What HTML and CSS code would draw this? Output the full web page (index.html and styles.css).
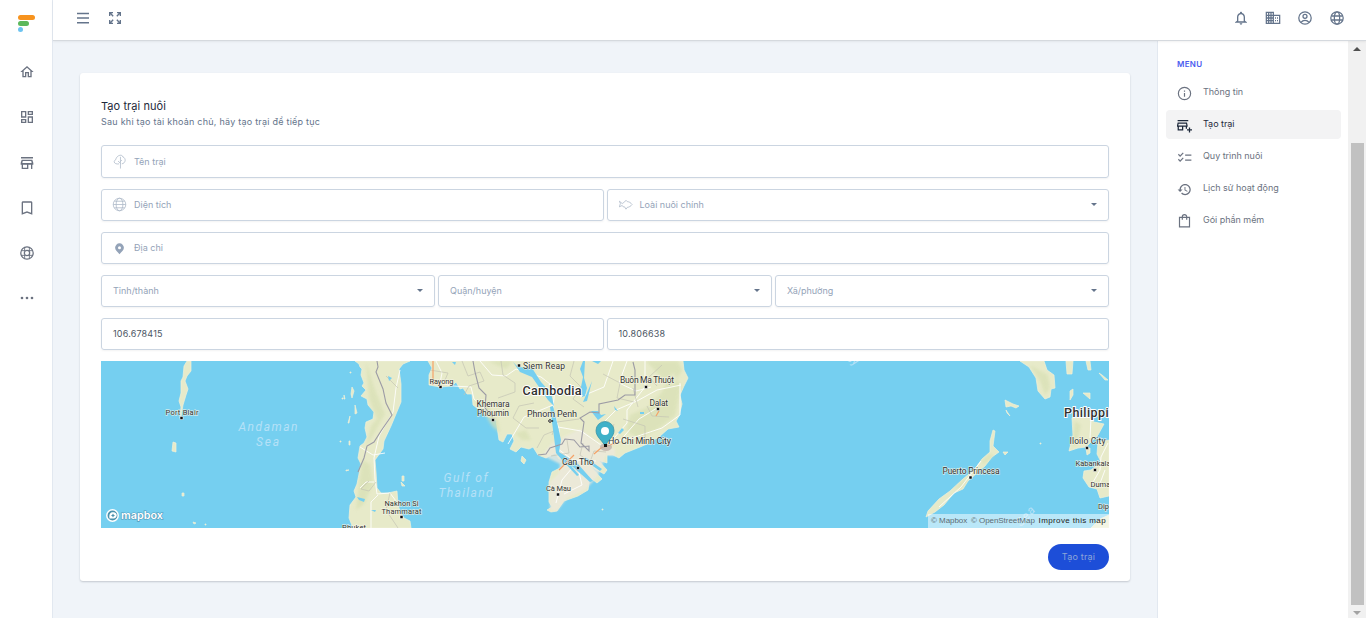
FILE: index.html
```html
<!DOCTYPE html>
<html lang="vi">
<head>
<meta charset="utf-8">
<title>Tạo trại nuôi</title>
<link rel="stylesheet" href="styles.css">
</head>
<body>
<div class="app">
  <nav class="rail">
    <svg class="logo" viewBox="0 0 18 18"><rect width="17" height="5" rx="2.500" fill="#f7931e"/><rect y="6" width="11" height="5" rx="2.500" fill="#5cb85c"/><circle cx="2.500" cy="14.500" r="2.500" fill="#6cc3f0"/></svg>
    <svg class="icon" viewBox="0 0 24 24"><path d="M12 5.690l5 4.500V18h-2v-6H9v6H7v-7.810l5-4.500M12 3L2 12h3v8h6v-6h2v6h6v-8h3L12 3z"/></svg>
    <svg class="icon" viewBox="0 0 24 24"><path d="M19 5v2h-4V5h4M9 5v6H5V5h4m10 8v6h-4v-6h4M9 17v2H5v-2h4M21 3h-8v6h8V3zM11 3H3v10h8V3zm10 8h-8v10h8V11zm-10 4H3v6h8v-6z"/></svg>
    <svg class="icon" viewBox="0 0 24 24"><path d="M18.360 9l.6 3H5.040l.6-3h12.720M21 3H3v2.200h18V3zm-1 4H4l-1.500 5v2.500H4V21h10v-6.500h4V21h2v-6.500h1.500V12L20 7zM6 19v-4.500h6V19H6z"/></svg>
    <svg class="icon" viewBox="0 0 24 24"><path d="M18 2H6c-1.100 0-2 .9-2 2v18l8-3 8 3V4c0-1.100-.9-2-2-2zm0 17l-6-2.200L6 19V4h12v15z"/></svg>
    <svg class="icon line" viewBox="0 0 24 24"><circle cx="12" cy="12" r="9.300"/><circle cx="12" cy="12" r="4"/><path d="M8.500 3.500V9M15.500 3.500V9M8.500 15v5.500M15.500 15v5.500M3.500 8.500H9M3.500 15.500H9M15 8.500h5.500M15 15.500h5.500" stroke-width="1.400"/></svg>
    <svg class="icon" viewBox="0 0 24 24"><circle cx="4.500" cy="12" r="2"/><circle cx="12" cy="12" r="2"/><circle cx="19.500" cy="12" r="2"/></svg>
  </nav>

  <div class="shell">
    <header class="topbar">
      <div class="group">
        <svg class="icon" viewBox="0 0 24 24"><path d="M3 4h18v2.200H3zM3 11h18v2.200H3zM3 18h18v2.200H3z"/></svg>
        <svg class="icon" viewBox="0 0 24 24"><path d="M3 3h6v2H6.500l3.500 3.500L8.500 10 5 6.500V9H3zM21 3v6h-2V6.500L15.500 10 14 8.500 17.500 5H15V3zM3 21v-6h2v2.500L8.500 14l1.500 1.500L6.500 19H9v2zM21 21h-6v-2h2.500L14 15.500l1.500-1.500 3.500 3.500V15h2z"/></svg>
      </div>
      <div class="group">
        <svg class="icon" viewBox="0 0 24 24"><path d="M12 22c1.100 0 2-.9 2-2h-4c0 1.100.9 2 2 2zm6-6v-5c0-3.070-1.630-5.640-4.500-6.320V4c0-.83-.67-1.500-1.500-1.500s-1.500.67-1.500 1.500v.68C7.640 5.360 6 7.920 6 11v5l-3 2.500V19h18v-.5L18 16zm-2 1H8v-6c0-2.480 1.510-4.500 4-4.500s4 2.020 4 4.500v6z"/></svg>
        <svg class="icon line" viewBox="0 0 24 24"><path d="M2 3.500h10.500V20H2zM2 8h10M2 12h10M2 16h10M5.500 4v16M9 4v16M12.500 8H22v12h-9.500M15 12h1.500M15 16h1.500M18 12h1.500M18 16h1.500"/></svg>
        <svg class="icon line" viewBox="0 0 24 24"><circle cx="12" cy="12" r="9.300"/><circle cx="12" cy="9.500" r="3"/><path d="M6 18.500c1.500-2 3.500-3 6-3s4.500 1 6 3"/></svg>
        <svg class="icon line" viewBox="0 0 24 24"><circle cx="12" cy="12" r="9.300"/><ellipse cx="12" cy="12" rx="4" ry="9.300"/><path d="M3.500 9h17M3.500 15h17"/></svg>
      </div>
    </header>

    <div class="body">
      <main class="content">
        <section class="card">
          <h1 class="title">Tạo trại nuôi</h1>
          <p class="subtitle">Sau khi tạo tài khoản chủ, hãy tạo trại để tiếp tục</p>
          <div class="form">
            <div class="field first">
              <svg class="fi" viewBox="0 0 16 16"><path d="M9 15.500V3M9 10L6.500 7.500M9 8l1.500-1.500M7.500 10.500c-4.500 1-7-2.500-3.500-4.500C5 1 11 0 11.500 3c4 1.500 3 7-1 7.500"/></svg>
              <span>Tên trại</span>
            </div>
            <div class="row">
              <div class="field">
                <svg class="fi" viewBox="0 0 16 16"><circle cx="8" cy="8" r="6.700"/><ellipse cx="8" cy="8" rx="3.600" ry="6.700"/><path d="M1.300 8h13.400M2.500 4.500h11M2.500 11.500h11"/></svg>
                <span>Diện tích</span>
              </div>
              <div class="field">
                <svg class="fi" viewBox="0 0 16 16"><path d="M4.500 7L1.500 4.500 2.500 7l-1 3.500L4.500 9l1 1.500H7L8.500 13l1.500-2c2-.2 3.500-1 5-3C13.500 6 12 5 10 5L8.500 3.500 7 5.300z"/></svg>
                <span>Loài nuôi chính</span><i class="caret"></i>
              </div>
            </div>
            <div class="field">
              <svg class="fi solid" viewBox="0 0 16 16"><path fill-rule="evenodd" d="M8 2.500a4.700 4.700 0 0 0-4.700 4.700c0 2.800 2.600 4.500 4.700 6.800 2.100-2.300 4.700-4 4.700-6.800A4.700 4.700 0 0 0 8 2.500zm0 3a1.600 1.600 0 1 1 0 3.200 1.600 1.600 0 0 1 0-3.200z"/></svg>
              <span>Địa chỉ</span>
            </div>
            <div class="row">
              <div class="field"><span>Tỉnh/thành</span><i class="caret"></i></div>
              <div class="field"><span>Quận/huyện</span><i class="caret"></i></div>
              <div class="field"><span>Xã/phường</span><i class="caret"></i></div>
            </div>
            <div class="row">
              <div class="field value"><span>106.678415</span></div>
              <div class="field value"><span>10.806638</span></div>
            </div>
            <div class="map">
              <svg class="chart" viewBox="101 361 1008 167">
                <g class="land">
                  <path d="M355 361L359 364 360 367 362 369 361 375 364 383 362 386 366 390 361 396 367 399 368 405 374 412 373 419 366 422 365 428 367 437 364 443 360 446 358 458 361 464 359 474 357 484 354 491 356 497 350 505 349 518 353 528H411L410 521 404 518 401 514 398 505 397 491 388 493 381 493 377 488 376 472 375 460 383 449 384 441 391 426 396 414 401 402 401 384 399 369 403 364 410 361z"/>
                  <path d="M428 361L432 368 429 375 429 385 440 387 452 386 456 382 460 389 463 388 467 394 472 394 473 405 482 412 488 417 496 420 499 440 503 442 507 434 512 434 514 441 510 449 516 452 521 447 529 449 533 447 538 455 546 458 555 453 559 459 567 459 565 466 560 468 552 472 549 482 549 502 552 507 547 510 551 512 557 511 564 501 578 496 588 490 589 483 583 472 597 483 602 479 590 466 604 474 607 470 598 460 607 463 607 455 613 455 619 458 625 453 640 447 647 444 659 437 668 429 679 427 676 421 679 416 682 404 680 395 684 386 688 378 684 370 683 361z"/>
                  <path d="M926 517L928 511 939 499 950 491 963 479 975 469 982 459 990 452 990 441 993 430 995 431 993 446 999 452 992 457 985 466 977 473 968 481 963 489 954 493 944 505 935 512z"/>
                  <path d="M1020 361L1029 367 1036 378 1038 391 1045 399 1050 397 1051 389 1055 388 1054 375 1047 370 1044 361zM1072 418L1073 435 1069 451 1078 448 1086 447 1098 435 1104 424 1094 422 1088 417zM1109 440L1098 442 1097 454 1101 462 1091 470 1084 471 1083 478 1089 487 1097 489 1100 498 1109 496zM1109 515L1100 519 1091 528H1109zM1086 448l1 7 3-2 0-5zM1066 361l1 13 5 0 1-13zM1086 361l2 9 3 0-1-9zM1070 391l3-2 0 6-3 5zM1083 393l7 0 0 6zM1099 373l6 7 3 0-6-5z"/>
                  <path d="M187 361l4 0 0 10-4 5-2 5 3 8-2 6-3 10-2 12-1 1 1-11-2-6 2-8 0-12 2-4 1-11zM173 442l3 1 0 9-4-1zM182 493l2 0 0 3-2 0zM193 522l3 1-2 1zM205 524h1v1h-1zM352 387l2 4-2 7-1-4zM344 395l1 4-1 0zM355 405l2 8-2 1zM350 416l-2 7 1 0zM342 398h1v1h-1zM350 372h1v1h-1zM351 395l1 0M349 441h1v4h-1zM402 476h2v5h-2zM401 482l4 4-3 0zM522 456l4 4-2 4-3-3zM1005 400l8 4 6 2-3 2-5-2-5 1zM1006 410l4 6-3-3zM1003 452l5 0-3 3zM340 441h1v1h-1zM346 470l3 0-3 1zM602 509h1v1h-1zM1040 443h1v1h-1z"/>
                </g>
                <g class="relief">
                  <path d="M366 361l5 16 5 15 9 22-13 23-6 10 5-21 6-7-8-21zM362 460l8 4 3 20-9 20-8 6z"/>
                  <path d="M478 402l8 1 12 18 2 12-8-7zM515 433l11-3 5 10-9 0zM630 415l18-8 13-14 12-21 8 14-6 30-18 14-20 8-11-8zM646 361l15 16 12 9 9-16-4-9zM488 361l18 8 7-8z"/>
                  <path d="M1030 365l10 16 5 14 5-7-2-13zM1075 421l6 4-5 20-4 1zM954 489l10-9 5-3-7 10zM981 462l9-8 4 1-10 9z"/>
                </g>
                <path class="delta" d="M542 455l10-12 28-14 18 14 17 6 0 7-9-1-2 6-7 16-12 13-18 8-10 13-7-1 0-28 9-9 1-9-10-5z"/>
                <g class="roads">
                  <path d="M400 370l-4 18-3 24-14 24-5 22 1 21 2 15 13-1 6 8M360 447l13 8 12-2M378 495l-7 7 0 26M374 482l-8 0-6 6"/>
                  <path d="M436 361l6 12-2 10 13 3 18 1 3 12 20 18M480 361l12 14 14 1 10-7 25 8 14 11-2 20M553 405l-29 12-16 27M553 409l6 20-1 20 15 11 23 1M558 427l23 4 20 14 34-8 27-9 18-13 0-32M605 445l-4-20 15-15 21-9 20-11 24-5M613 361l-9 26-24 10M627 361l-8 22 17 8 15-4M645 361l0 26-18 23 0 13-18 21M657 408l-18 11-21 24M578 461l-16 19-6 23M578 468l4 17-18 9"/>
                  <path d="M1108 443l-7 14-1 13-8 14M1091 418l-1 20M1105 470l-6 16M981 461l-20 26-22 20"/>
                </g>
                <g class="lines">
                  <path d="M386 376l12 12M369 481l-8 8 8 2 7-9M430 370l18 3-3 7M462 361l6 15 12-4 4 9-15 5-5 9M501 361l2 14 12 8 0 9-17 6M574 361l-4 15 11 11-8 12 11 8M603 374l17 9-3 15 17 4M657 386l-8-9 13-12M579 419l-22 3-5 13M534 403l-15 3-6 12 13 10 13 0M559 429l-15 6-7 13M567 440l2 13-18 3M583 443l-3 12 10 7 4-11 12 1M609 442l5-18M623 419l22 7 0 15M638 407l-5-19M669 417l-17-1-5-10M390 493l-4 17 12 18"/>
                </g>
                <path class="water" d="M513 362l7 10 12 5 16 23 6 6-3-13-10-11-9-14-14-1zM583 361h2l-1 17 3 10-2 8-3 1-1-10 2-10-3-8zM550 407l3-1 3 12 5 22-2 12 8 9 12 14-2 1-14-15-7-8-2-16zM559 452l19 12 15 17-3 1-17-15-15-13zM585 457l17 12-2 2-17-12zM591 411l7 0 3 4 5-1-8 6zM614 406l4 5-3-1zM618 433l4-5 2 2-4 4zM592 381l-5 20-4 1 4-9zM388 376l4 2-3 3zM357 394l9 6-6-1zM357 497l8 2-1 3-5-2zM371 510l5 0-1 2zM592 361h9l-3 3zM452 362l4 0-1 3zM640 412h4v2h-4z"/>
                <g class="borders">
                  <path d="M377 361l1 6-2 5 7 17 3 14 6 12-11 16-7 11-7 4-3 12-6 14"/>
                  <path d="M473 361l2 11 4 16 7 7-1 13 8 9M538 455l8-1 4-6 12-4 3-5 9 1 6 7 9-1 0 5-8-8 3-21-4-4 10-6 9 1 0-9 19-4 7-5 10 0 0-25-2-8"/>
                </g>
                <path class="motor" d="M433 361v24M594 454l7-6 9-3 10-3M559 470l15-15M656 416l3-5"/>
                <ellipse cx="606" cy="447" rx="6" ry="4" fill="#b9aaa4" opacity=".7"/>
                <g class="dots"><path d="M180 416.500h3v3h-3zM439 385.500h3v3h-3zM400 515.500h3v3h-3zM491.500 418.500h3v3h-3zM517.500 364h3v3h-3zM644.500 385.500h3v3h-3zM656.500 407.500h3v3h-3zM576.500 466.500h3v3h-3zM556.500 493h3v3h-3zM969 476h3v3h-3zM1085.500 446.500h3v3h-3zM1093.500 468.500h3v3h-3z"/><circle cx="550" cy="421" r="1.300" fill="#fff" stroke="#222"/><circle cx="552.500" cy="421" r=".8"/></g>
                <g class="sea">
                  <text x="238.500" y="431" textLength="59">Andaman</text><text x="256" y="446" textLength="23">Sea</text>
                  <text x="443.500" y="481.500" textLength="44">Gulf of</text><text x="438.500" y="497" textLength="54">Thailand</text>
                  <text x="846" y="360" transform="rotate(30 846 360)">ey</text>
                  <text x="1021" y="527" textLength="22" transform="rotate(-48 1021 527)">Sea</text>
                </g>
                <g class="towns">
                  <text x="165.500" y="414.500" textLength="33">Port Blair</text>
                  <text x="429.500" y="383.500" textLength="24">Rayong</text>
                  <text x="476.500" y="406.500" textLength="33" class="m">Khemara</text>
                  <text x="477" y="416" textLength="32" class="m">Phoumin</text>
                  <text x="523" y="369" textLength="42" class="m">Siem Reap</text>
                  <text x="527" y="416.500" textLength="50" class="l">Phnom Penh</text>
                  <text x="620" y="382.500" textLength="54" class="m">Buôn Ma Thuột</text>
                  <text x="649.500" y="405.500" textLength="18.500" class="m">Dalat</text>
                  <text x="608" y="443.500" textLength="63" class="l">Ho Chi Minh City</text>
                  <text x="562" y="464.500" textLength="32" class="l">Can Tho</text>
                  <text x="546" y="491" textLength="25">Cà Mau</text>
                  <text x="384.500" y="505.500" textLength="34">Nakhon Si</text>
                  <text x="381.500" y="514" textLength="40">Thammarat</text>
                  <text x="342" y="530" textLength="24">Phuket</text>
                  <text x="942.500" y="473.500" textLength="57" class="m">Puerto Princesa</text>
                  <text x="1069.500" y="443.500" textLength="36" class="m">Iloilo City</text>
                  <text x="1075.500" y="466">Kabankalan</text>
                  <text x="1090.500" y="487">Dumaguete</text>
                  <text x="1098" y="509">Dipolog</text>
                </g>
                <g class="countries"><text x="522.500" y="394.500" textLength="59">Cambodia</text><text x="1064" y="416.500" textLength="66">Philippines</text></g>
                <path d="M605 446c-3-6-9-9-9-15.500a9 9 0 0 1 18 0c0 6.500-6 9.500-9 15.500z" fill="#3fb1c8" stroke="#318ca0" stroke-width=".7"/><circle cx="605" cy="431" r="4" fill="#fff"/><path class="dots" d="M604 444h3v3h-3z"/>
                <g class="brand"><circle cx="112.500" cy="515.500" r="5.700" fill="#4b91ac" stroke="#fff" stroke-width="1.500"/><path d="M109.500 518.500c-.8-4.500 1-6.300 3.500-6.300a3.200 3.200 0 1 1 0 6.300z" fill="#fff"/><path d="M113 513.500l.7 1.300 1.300.7-1.300.7-.7 1.300-.7-1.300-1.300-.7 1.300-.7z" fill="#4b91ac"/><text x="121" y="519" textLength="42" lengthAdjust="spacingAndGlyphs">mapbox</text></g>
              </svg>
              <div class="credit"><span>© Mapbox</span> <span>© OpenStreetMap</span> <b>Improve this map</b></div>
            </div>
          </div>
          <button class="submit">Tạo trại</button>
        </section>
      </main>

      <aside class="menu">
        <h2 class="menu-title">MENU</h2>
        <a class="item"><svg class="icon line" viewBox="0 0 24 24"><circle cx="12" cy="12" r="9.800"/><path d="M12 11v6M12 7v2"/></svg><span>Thông tin</span></a>
        <a class="item active"><svg class="icon" viewBox="0 0 24 24"><path d="M2 3h17v2H2zM15 17h2v-3h1v-2l-1-5H2l-1 5v2h1v6h9v-6h4v3zm-6 1H4v-4h5v4zM3 12l.6-3h11.800l.6 3H3zM22 18v-3h-2v3h-3v2h3v3h2v-3h3v-2z" transform="translate(-1 0)"/></svg><span>Tạo trại</span></a>
        <a class="item"><svg class="icon" viewBox="0 0 24 24"><path d="M23 7h-10v2h10V7zm0 8h-10v2h10v-2zM5 11 1.500 7.500l1.400-1.400L5 8.200l4.300-4.300 1.400 1.400L5 11zm0 8-3.500-3.500 1.400-1.400L5 16.200l4.300-4.300 1.400 1.400L5 19z"/></svg><span>Quy trình nuôi</span></a>
        <a class="item"><svg class="icon" viewBox="0 0 24 24"><path d="M13 3c-4.970 0-9 4.030-9 9H1l3.890 3.890.07.14L9 12H6c0-3.870 3.130-7 7-7s7 3.130 7 7-3.130 7-7 7c-1.930 0-3.680-.79-4.940-2.060l-1.420 1.420C8.270 19.990 10.510 21 13 21c4.970 0 9-4.030 9-9s-4.030-9-9-9zm-1 5v5l4.280 2.540.72-1.210-3.500-2.080V8H12z"/></svg><span>Lịch sử hoạt động</span></a>
        <a class="item"><svg class="icon line" viewBox="0 0 24 24"><path d="M4 5.500h16v15H4zM8.500 9V4.500a3.500 3.500 0 0 1 7 0V9"/></svg><span>Gói phần mềm</span></a>
      </aside>

      <div class="scroll"><i class="up"></i><div class="thumb"></div><i class="down"></i></div>
    </div>
  </div>
</div>
</body>
</html>
```
FILE: styles.css
```css
* { box-sizing: border-box; }
body { margin: 0; font-family: Inter, "Noto Sans", sans-serif; font-size: 9px; color: #64748b; background: #fff; overflow: hidden; }
.app { display: flex; width: 1366px; height: 618px; }
.icon { display: block; width: 16px; height: 16px; fill: currentColor; }
.icon.line { fill: none; stroke: currentColor; stroke-width: 1.9; }

.rail { width: 53px; flex: none; border-right: 1px solid #e2e8f0; display: flex; flex-direction: column; align-items: center; gap: 29.25px; padding: 15px 0 0 2px; color: #6b7280; }
.logo { width: 18px; height: 18px; margin-bottom: 1.75px; }

.shell { flex: 1; display: flex; flex-direction: column; min-width: 0; }
.topbar { height: 41px; flex: none; display: flex; justify-content: space-between; padding: 10px 21px 0 22px; border-bottom: 1px solid #d5d9de; box-shadow: 0 1px 2px rgba(0,0,0,.06); color: #64748b; z-index: 1; }
.group { display: flex; gap: 16px; }

.body { flex: 1; display: flex; min-height: 0; }
.content { flex: 1; background: #f0f4f9; padding: 32px 27px 0; }
.card { height: 508px; background: #fff; border-radius: 3px; box-shadow: 0 1px 2px rgba(15,23,42,.2); padding: 26px 21px 0; display: flex; flex-direction: column; }
.title { margin: 0; font-size: 11px; line-height: 15px; font-weight: 400; color: #1e293b; letter-spacing: .06px; }
.subtitle { margin: 2px 0 0; font-size: 9px; line-height: 12px; height: 12px; color: #64748b; letter-spacing: .24px; }
.form { margin-top: 17px; display: flex; flex-direction: column; gap: 11px; }
.row { display: flex; gap: 3px; }
.field { flex: 1; height: 32px; flex-basis: 0; display: flex; align-items: center; border: 1px solid #cbd5e1; border-radius: 3px; padding: 0 11px 2px; box-shadow: 0 1px 2px rgba(0,0,0,.05); color: #94a3b8; }
.form > .field { flex: none; }
.field.first { height: 33px; padding-bottom: 1px; }
.field.value { color: #4b5563; letter-spacing: .18px; }
.fi { width: 15px; height: 15px; margin: 1px 7px 0 -1px; fill: none; stroke: #aab6c6; stroke-width: .8; }
.fi.solid { fill: #94a3b8; stroke: none; margin-top: 2px; }
.caret { margin: 0 0 0 auto; border: 3.5px solid transparent; border-top-color: #64748b; border-bottom: 0; }

.map { height: 167px; position: relative; overflow: hidden; background: #75cff0; }
.chart { display: block; width: 1008px; height: 167px; font-family: Roboto, sans-serif; }
.land { fill: #e7eac9; stroke: #f0f0d8; stroke-width: .7; }
.relief { fill: #d8e0b4; opacity: .7; filter: blur(1.5px); }
.delta { fill: #ece9dc; opacity: .8; filter: blur(1px); }
.roads { fill: none; stroke: #fff; stroke-width: 1; opacity: .85; }
.lines { fill: none; stroke: #c4c4b5; stroke-width: .7; }
.borders { fill: none; stroke: #9c9ba5; stroke-width: 1.1; }
.water { fill: #75cff0; }
.motor { fill: none; stroke: #f5a267; stroke-width: 1.2; }
.dots { fill: #111; }
.dots path { stroke: #fff; stroke-width: .5; }
.sea { font-size: 12px; font-style: italic; fill: #b5e1f7; }
.towns { font-size: 7.5px; font-weight: 400; fill: #333; stroke: #f5f5e8; stroke-width: 1.3; stroke-opacity: .75; paint-order: stroke; }
.towns .m { font-size: 8.5px; }
.towns .l { font-size: 9px; }
.countries { font-size: 12.5px; font-weight: 500; fill: #303030; stroke: #fff; stroke-width: 1.8; paint-order: stroke; }
.brand { font-family: Inter, sans-serif; font-size: 10.5px; font-weight: 600; }
.brand text { fill: #fff; stroke: #5199b8; stroke-width: 1.2; paint-order: stroke; }
.credit { position: absolute; right: 0; bottom: 0; height: 14px; padding: 0 3px; width: 181px; display: flex; justify-content: space-between; background: rgba(255,255,255,.5); font: 8px/13px "Liberation Sans", sans-serif; color: #5d6d73; white-space: nowrap; }
.credit span { letter-spacing: -.05px; }
.credit b { font-weight: 400; color: #222; letter-spacing: .38px; }
.submit { align-self: flex-end; margin-top: 16px; width: 61px; height: 26px; border: 0; border-radius: 13px; background: #1d4ed8; color: #8ea6d8; font: 9px Inter, sans-serif; letter-spacing: .2px; padding: 0 0 2px; }

.menu { width: 191px; flex: none; background: #fff; border-left: 1px solid #e2e8f0; padding: 18px 7px 0 8px; }
.menu-title { margin: 0 0 8px; padding-left: 11px; font-size: 8px; line-height: 11px; height: 11px; font-weight: 600; color: #4b5bef; letter-spacing: .3px; }
.item { display: flex; align-items: center; height: 29px; margin-top: 3px; padding: 0 11px; border-radius: 4px; color: #6b7280; font-size: 9px; letter-spacing: -.03px; }
.menu-title + .item { margin-top: 0; }
.item .icon { width: 15px; height: 15px; margin: 2px 11px 0 0; }
.item span { margin-top: -2px; }
.item.active { background: #f3f3f4; color: #1e293b; }

.scroll { width: 18px; flex: none; background: #f1f1f1; display: flex; flex-direction: column; align-items: center; padding: 6px 0 3px; }
.up, .down { border: 4px solid transparent; }
.up { border-bottom-color: #505050; border-top: 0; }
.down { border-top-color: #a3a3a3; border-bottom: 0; margin-top: auto; }
.thumb { width: 13px; height: 462px; margin: 92px 0 0 1px; background: #c1c1c1; }
```
